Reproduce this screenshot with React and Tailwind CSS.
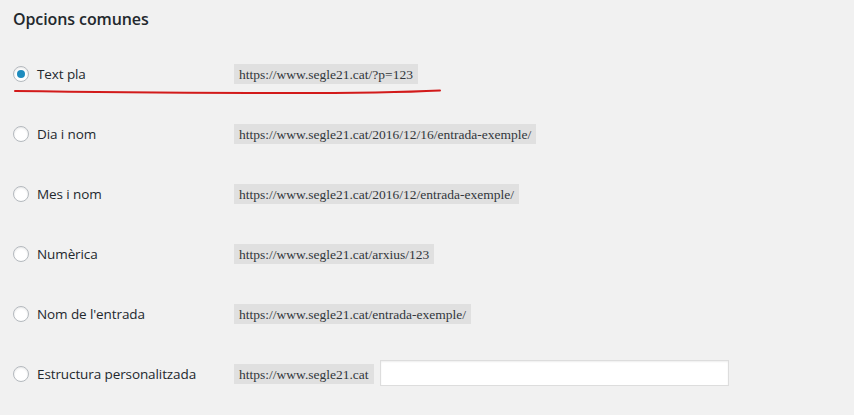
import React from "react";

const rows = [
  { label: "Text pla", url: "https://www.segle21.cat/?p=123", checked: true },
  { label: "Dia i nom", url: "https://www.segle21.cat/2016/12/16/entrada-exemple/" },
  { label: "Mes i nom", url: "https://www.segle21.cat/2016/12/entrada-exemple/" },
  { label: "Numèrica", url: "https://www.segle21.cat/arxius/123" },
  { label: "Nom de l'entrada", url: "https://www.segle21.cat/entrada-exemple/" },
  { label: "Estructura personalitzada", url: "https://www.segle21.cat", input: true },
];

function Radio({ checked }) {
  return (
    <span className="flex h-4 w-4 shrink-0 items-center justify-center rounded-full border border-[#b4b9be] bg-white shadow-[inset_0_1px_2px_rgba(0,0,0,0.1)]">
      {checked && <span className="h-2 w-2 rounded-full bg-[#1e8cbe]" />}
    </span>
  );
}

export default function App() {
  return (
    <div className="relative min-h-[415px] w-[854px] bg-[#f1f1f1] text-[#23282d] font-['Open_Sans','Noto_Sans',sans-serif]">
      <h2 className="pl-[13px] pt-[7px] text-[16px] font-semibold leading-[24px] tracking-[-0.1px]">Opcions comunes</h2>
      <div className="mt-[33px] flex flex-col">
        {rows.map((r) => (
          <div key={r.label} className="flex h-[60px] items-start">
            <div className="flex w-[234px] shrink-0 items-center gap-[8px] pl-[13px]">
              <Radio checked={r.checked} />
              <span className="text-[13.5px] leading-[20px] tracking-[-0.1px]">{r.label}</span>
            </div>
            <code className="bg-[rgba(0,0,0,0.07)] px-[5px] pt-[1px] text-[13.5px] leading-[19px] text-[#32373c] font-['Liberation_Serif',serif]">
              {r.url}
            </code>
            {r.input && (
              <input
                type="text"
                className="ml-[6px] -mt-[4px] h-[26px] w-[349px] border border-[#ddd] bg-white shadow-[inset_0_1px_2px_rgba(0,0,0,0.07)] outline-none"
              />
            )}
          </div>
        ))}
      </div>
      <svg className="pointer-events-none absolute left-0 top-0" width="854" height="415">
        <path d="M15 91 Q 120 92.5 250 93 T 440 90.5" stroke="#d21a1a" strokeWidth="2" fill="none" strokeLinecap="round" />
      </svg>
    </div>
  );
}
